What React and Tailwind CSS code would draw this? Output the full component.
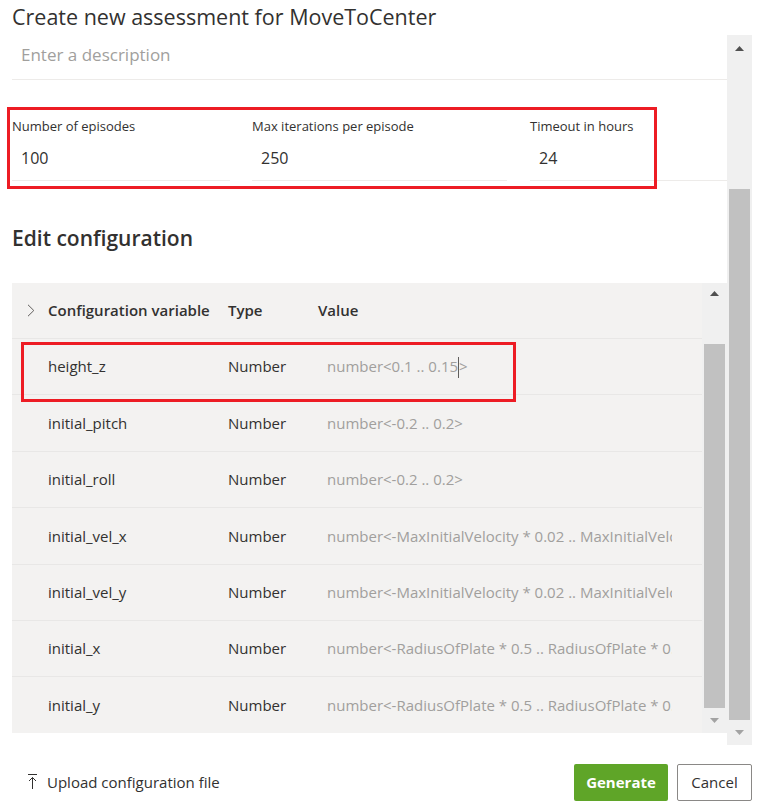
import React from 'react'

const rows = [
  { name: 'height_z', value: 'number<0.1 .. 0.15', tail: '>', caret: true },
  { name: 'initial_pitch', value: 'number<-0.2 .. 0.2>' },
  { name: 'initial_roll', value: 'number<-0.2 .. 0.2>' },
  { name: 'initial_vel_x', value: 'number<-MaxInitialVelocity * 0.02 .. MaxInitialVelocity * 0.02>' },
  { name: 'initial_vel_y', value: 'number<-MaxInitialVelocity * 0.02 .. MaxInitialVelocity * 0.02>' },
  { name: 'initial_x', value: 'number<-RadiusOfPlate * 0.5 .. RadiusOfPlate * 0.5>' },
  { name: 'initial_y', value: 'number<-RadiusOfPlate * 0.5 .. RadiusOfPlate * 0.5>' },
]

const fields = [
  { label: 'Number of episodes', value: '100', w: 'w-[218px]' },
  { label: 'Max iterations per episode', value: '250', w: 'w-[255px]' },
  { label: 'Timeout in hours', value: '24', w: 'w-[197px]' },
]

function Arrow({ up, className = '' }) {
  return (
    <svg width="9" height="5" viewBox="0 0 9 5" className={className}>
      <path d={up ? 'M0 5L4.5 0L9 5Z' : 'M0 0L4.5 5L9 0Z'} fill="currentColor" />
    </svg>
  )
}

function Field({ label, value, w }) {
  return (
    <div className={w}>
      <div className="text-[13px] leading-[18px] text-[#323130]">{label}</div>
      <div className="mt-[11px] pb-[10px] pl-[9px] border-b border-[#edebe9] text-[16px] leading-[24px] text-[#323130]">
        {value}
      </div>
    </div>
  )
}

export default function App() {
  return (
    <div className="relative w-[760px] h-[807px] overflow-hidden bg-white text-[#323130] font-['Open_Sans','Noto_Sans',sans-serif]">
      {/* title */}
      <div className="h-[35px] px-3 pt-[3px] text-[21.5px] leading-[28px] text-[#323130] whitespace-nowrap">
        Create new assessment for MoveToCenter
      </div>

      {/* scroll area */}
      <div className="flex h-[710px]">
        <div className="w-[715px] ml-3">
          <div className="pt-[8px] pb-[12px] pl-[9px] border-b border-[#edebe9] text-[17px] leading-[24px] text-[#a19f9d]">
            Enter a description
          </div>

          <div className="mt-[37px] flex gap-[22px]">
            {fields.map((f, i) => (
              <div key={f.label} className={i === 2 ? 'ml-px' : ''}>
                <Field {...f} />
              </div>
            ))}
          </div>

          <div className="mt-[43px] text-[21px] leading-[28px] font-semibold text-[#323130]">
            Edit configuration
          </div>

          {/* configuration table */}
          <div className="mt-[31px] flex h-[450px]">
            <div className="w-[690px] bg-[#f3f2f1] overflow-hidden">
              <div className="flex items-center h-[56px] border-b border-[#e8e7e6] text-[15px] font-semibold">
                <div className="w-[36px] flex justify-center pl-[2px]">
                  <svg width="8" height="13" viewBox="0 0 8 13" fill="none">
                    <path d="M1 0.8L6.8 6.5L1 12.2" stroke="#605e5c" strokeWidth="1" />
                  </svg>
                </div>
                <div className="w-[180px]">Configuration variable</div>
                <div className="w-[90px]">Type</div>
                <div>Value</div>
              </div>
              {rows.map((r, i) => (
                <div
                  key={r.name}
                  className={`flex items-center h-[56.4px] text-[15px] ${i < rows.length - 1 ? 'border-b border-[#e8e7e6]' : ''}`}
                >
                  <div className="w-[36px]" />
                  <div className="w-[180px]">{r.name}</div>
                  <div className="w-[90px]">Number</div>
                  <div className="w-[354px] pl-[9px] overflow-hidden whitespace-nowrap text-[#a19f9d]">
                    {r.value}
                    {r.caret && <span className="inline-block w-px h-[21px] bg-[#605e5c] align-middle" />}
                    {r.tail}
                  </div>
                </div>
              ))}
            </div>
            {/* inner scrollbar */}
            <div className="w-[25px] flex flex-col bg-[#f0f0f0]">
              <div className="h-[20px] flex items-center justify-center text-[#505050]">
                <Arrow up />
              </div>
              <div className="h-[41px]" />
              <div className="flex-1 mx-[2px] bg-[#c1c1c1]" />
              <div className="h-[25px] flex items-center justify-center text-[#a3a3a3]">
                <Arrow />
              </div>
            </div>
          </div>
        </div>

        {/* outer scrollbar */}
        <div className="w-[25px] flex flex-col bg-[#f0f0f0]">
          <div className="h-[26px] flex items-center justify-center text-[#505050]">
            <Arrow up />
          </div>
          <div className="h-[128px]" />
          <div className="flex-1 mx-[2px] bg-[#c1c1c1]" />
          <div className="h-[25px] flex items-center justify-center text-[#a3a3a3]">
            <Arrow />
          </div>
        </div>
      </div>

      {/* footer */}
      <div className="flex items-center justify-between pt-[19px] pl-[28px] pr-[8px]">
        <div className="flex items-center gap-[10px] h-[37px] text-[15px] text-[#323130]">
          <svg width="9" height="15" viewBox="0 0 9 15" fill="none" className="-translate-y-px">
            <path d="M0 0.5H9M4.5 3.5V15M1 7L4.5 3.5L8 7" stroke="#323130" strokeWidth="1" />
          </svg>
          <span>Upload configuration file</span>
        </div>
        <div className="flex gap-[9px]">
          <button className="w-[94px] h-[37px] rounded-[2px] bg-[#5fa528] text-white text-[15px] font-bold">
            Generate
          </button>
          <button className="w-[75px] h-[37px] rounded-[2px] border border-[#8a8886] bg-white text-[15px] text-[#323130]">
            Cancel
          </button>
        </div>
      </div>

      {/* annotation boxes */}
      <div className="absolute left-[7px] top-[107px] w-[650px] h-[82px] border-[3px] border-[#ed1c24]" />
      <div className="absolute left-[21px] top-[342px] w-[495px] h-[60px] border-[3px] border-[#ed1c24]" />
    </div>
  )
}
